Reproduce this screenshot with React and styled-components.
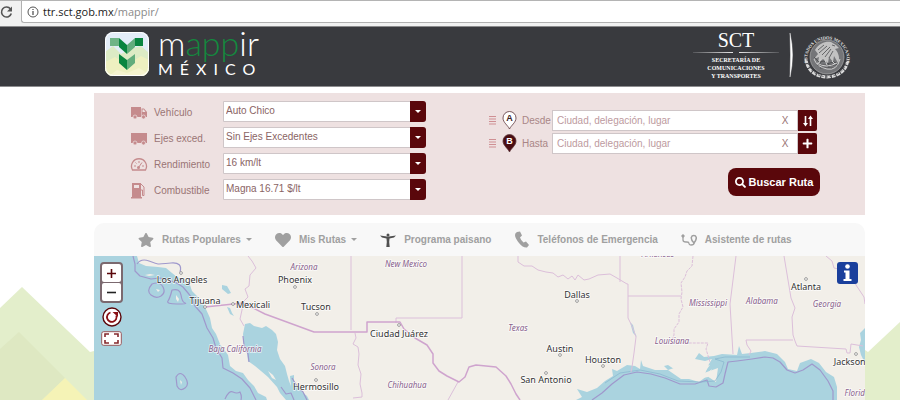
import React from "react";
import styled, { createGlobalStyle } from "styled-components";
import { FaStar, FaHeart, FaPlus, FaSearch } from "react-icons/fa";

const wine = "#5a070b";

const Global = createGlobalStyle`
* {
    box-sizing: border-box;
}
body {
    margin: 0;
    background: #fff;
    font-family: "Liberation Sans", Arial, sans-serif;
    font-size: 10px;
    color: #9a7575;
    overflow: hidden;
}
button, input, select {
    font: inherit;
    color: inherit;
    margin: 0;
    padding: 0;
    border: 0;
    border-radius: 0;
}
button {
    cursor: pointer;
}
svg {
    display: block;
    flex: none;
}
`;

const Page = styled.div`
    min-height: 100vh;
    display: flex;
    flex-direction: column;
`;

const BrowserBar = styled.div`
    height: 26px;
    display: flex;
    background: #f1f1f1;
    border-top: 1px solid #b4b4b4;
    padding-bottom: 3px;
`;

const Reload = styled.button`
    width: 21px;
    background: none;
    display: flex;
    align-items: center;
`;

const Address = styled.div`
    flex: 1;
    display: flex;
    align-items: center;
    gap: 4px;
    padding-left: 5px;
    background: #fff;
    border: 1px solid #b0b0b0;
    border-width: 0 0 1px 1px;
    border-radius: 0 0 0 3px;
`;

const UrlText = styled.span`
    font-family: "Open Sans", sans-serif;
    font-size: 11px;
    line-height: 20px;
    color: #8a8a8a;
    b {
        font-weight: 400;
        color: #222;
    }
`;

const Header = styled.header`
    height: 61px;
    display: flex;
    align-items: center;
    justify-content: space-between;
    padding: 0 49px 4px 105px;
    background: #393a3e;
    border-top: 1px solid #8a8a8c;
    border-bottom: 1px solid #8d8d8f;
`;

const Brand = styled.a`
    display: flex;
    gap: 9px;
    color: #fff;
    text-decoration: none;
    font-family: Lato, sans-serif;
`;

const BrandText = styled.div`
    display: flex;
    flex-direction: column;
`;

const BrandName = styled.span`
    font-size: 34px;
    font-weight: 300;
    line-height: 22px;
    height: 29px;
    em {
        font-style: normal;
        color: #14893e;
    }
`;

const BrandCountry = styled.span`
    font-size: 16px;
    line-height: 16px;
    letter-spacing: 7px;
`;

const Agency = styled.div`
    display: flex;
    align-items: center;
    gap: 8px;
`;

const AgencyText = styled.div`
    width: 86px;
    text-align: center;
    color: #fff;
    font-family: "Liberation Serif", serif;
    font-size: 6px;
    font-weight: 700;
    line-height: 8px;
`;

const AgencyName = styled.div`
    font-size: 20px;
    font-weight: 400;
    line-height: 20px;
`;

const AgencyRule = styled.div`
    display: flex;
    gap: 6px;
    margin: 2px 0 3px;
    &::before, &::after {
        content: "";
        flex: 1;
        height: 1px;
        background: linear-gradient(90deg, #55565a, #e6e6e6);
    }
    &::after {
        background: linear-gradient(270deg, #55565a, #e6e6e6);
    }
`;

const Body = styled.div`
    flex: 1;
    display: grid;
    grid-template-columns: 94px 1fr 35px;
`;

const Side = styled.div`
    display: flex;
    align-items: flex-end;
`;

const Content = styled.main`
    display: flex;
    flex-direction: column;
    padding-top: 6px;
    min-width: 0;
`;

const Panel = styled.section`
    display: flex;
    justify-content: space-between;
    min-height: 122px;
    padding: 5px 45px 12px 36px;
    background: #eee1e1;
    margin-bottom: 8px;
`;

const VehicleForm = styled.form`
    width: 296px;
`;

const Field = styled.div`
    display: grid;
    grid-template-columns: 24px 69px 1fr;
    align-items: center;
    height: 26px;
    label {
        padding-top: 3px;
    }
    > svg {
        margin-top: 3px;
    }
`;

const SelectBox = styled.div`
    display: flex;
    height: 21px;
    position: relative;
    select {
        flex: 1;
        appearance: none;
        background: #fff;
        border: 1px solid #cfc6c8;
        border-radius: 0 3px 3px 0;
        padding: 0 18px 2px 2px;
        color: #8a6464;
    }
`;

const Arrow = styled.span`
    position: absolute;
    top: 0;
    right: 0;
    width: 16px;
    height: 21px;
    display: grid;
    place-items: center;
    background: ${wine};
    border-radius: 0 3px 3px 0;
    pointer-events: none;
`;

const Caret = styled.i`
    border: solid transparent;
    border-width: 3px 3px 0;
    border-top-color: ${(p) => p.$color || "#fff"};
`;

const RouteForm = styled.form`
    width: 331px;
    display: flex;
    flex-direction: column;
    align-items: flex-end;
    padding-top: 12px;
`;

const Stop = styled.div`
    width: 100%;
    display: grid;
    grid-template-columns: 13px 20px 30px 1fr 19px;
    align-items: center;
    height: 21px;
    margin-bottom: 2px;
    padding-right: 3px;
    label {
        color: #a98686;
    }
`;

const Place = styled.div`
    display: flex;
    height: 21px;
    background: #fff;
    border: 1px solid #cfc6c8;
    input {
        flex: 1;
        min-width: 0;
        padding-left: 4px;
        background: none;
        outline: none;
    }
    input::placeholder {
        color: #bd9a9e;
        opacity: 1;
    }
    button {
        width: 24px;
        background: none;
    }
`;

const StopButton = styled.button`
    height: 21px;
    display: grid;
    place-items: center;
    background: ${wine};
    color: #fff;
    border-radius: 0 2px 2px 0;
`;

const SearchButton = styled.button`
    display: flex;
    align-items: center;
    justify-content: center;
    gap: 3px;
    width: 92px;
    height: 28px;
    margin-top: 12px;
    background: ${wine};
    color: #fff;
    border-radius: 8px;
    font-size: 11px;
    font-weight: 700;
`;

const Toolbar = styled.nav`
    display: flex;
    align-items: center;
    gap: 23px;
    height: 33px;
    padding-left: 44px;
    background: #f8f8f8;
    border-radius: 10px 10px 0 0;
`;

const Tool = styled.a`
    display: flex;
    align-items: center;
    gap: 8px;
    color: #a0a0a0;
    font-weight: 700;
    text-decoration: none;
    white-space: nowrap;
    ${Caret} {
        margin-left: -3px;
    }
`;

const MapArea = styled.section`
    position: relative;
    flex: 1;
    min-height: 144px;
    background: #f2efe9;
    overflow: hidden;
`;

const MapDrawing = styled.svg`
    width: 100%;
    height: auto;
    font-family: "Noto Sans", sans-serif;
    font-size: 9px;
    text-anchor: middle;
`;

const MapControls = styled.div`
    position: absolute;
    top: 6px;
    left: 6px;
    display: flex;
    flex-direction: column;
    align-items: center;
    gap: 4px;
`;

const Zoom = styled.div`
    width: 23px;
    border: 2px solid #7b696f;
    border-radius: 4px;
    background: #7b696f;
    display: grid;
    gap: 1px;
    button {
        height: 18px;
        display: grid;
        place-items: center;
        background: #fff;
        border-radius: 2px;
    }
`;

const IconButton = styled.button`
    background: none;
`;

const Info = styled.button`
    position: absolute;
    top: 6px;
    right: 7px;
    width: 21px;
    height: 22px;
    background: #1a3f9c;
    border-radius: 3px;
    color: #fff;
    display: grid;
    place-items: center;
`;

const LogoIcon = () => (
    <svg width="44" height="44" viewBox="0 0 44 44">
        <defs>
            <clipPath id="logo"><rect width="44" height="44" rx="8" /></clipPath>
        </defs>
        <g clipPath="url(#logo)">
            <path fill="#e3edf8" d="M0 0h44v44H0z" />
            <path fill="#dcebc5" d="M0 20l8-6 8 8 12-6 8-2 8 7v23H0z" />
            <path fill="#eef0c0" d="M0 30l10-5 12 8 14-9 8 4v16H0z" />
            <path fill="#f6f4cf" d="M4 44l8-6 10 3 12-5 10 6v2z" />
        </g>
        <rect x=".5" y=".5" width="43" height="43" rx="8" fill="none" stroke="#fff" />
        <path fill="#6fb487" d="M5 6h9v8H5z" />
        <path fill="#0a8540" d="M14 6l8 7v9l-8-7zM30 6h8v8h-8zM14 22l8 6v10l-8-7z" />
        <path fill="#62ad7c" d="M22 13l8-7v9l-8 7zM22 28l8-6v9l-8 7z" />
    </svg>
);

const Seal = () => (
    <svg width="48" height="50" viewBox="0 0 48 50">
        <defs>
            <path id="sealArc" d="M4.400 32a19.800 19.800 0 1 1 39.200 0" />
        </defs>
        <text fill="#e2e2e2" fontSize="4.500" fontWeight="700" fontFamily="Liberation Serif, serif" textAnchor="middle">
            <textPath href="#sealArc" startOffset="50%">ESTADOS UNIDOS MEXICANOS</textPath>
        </text>
        <circle cx="24" cy="27" r="17" fill="#747578" stroke="#b9b9b9" strokeWidth=".6" />
        <path fill="#c2c2c2" d="M12 20c4-7 11-9 16-8l5 3 3 3-4 1c4 4 5 10 3 14l-4-7-1 6-4-5-1 6-5-4-5 4 1-6-5 2 4-5z" />
        <path d="M15 20l6-5M16 23l8-7M19 25l8-8M22 27l6-8M26 28l4-7M29 15l3 1M11 27l5 5 5-1 3 3 6-2 4 1M18 32l-3 4M25 33l1 5M31 32l4 4M14 35h20M17 38h14" stroke="#4b4c4f" strokeWidth=".8" fill="none" />
        <path d="M11 29q3 8 13 10t13-10M14 33q9 6 20 0M18 29l-2 4M22 30l2 5M29 31l3 3" stroke="#cfcfcf" fill="none" />
        <path d="M3 29q2 17 21 18 19-1 21-18" fill="none" stroke="#dadada" strokeWidth="3" strokeDasharray="4 1" />
        <path d="M4 29q2 16 20 18 18-2 20-18" fill="none" stroke="#55565a" strokeDasharray="2 2" />
    </svg>
);

const VehicleIcon = ({ kind }) => (
    <svg width="18" height="17" viewBox="0 0 18 17" fill="#c58b8d">
        {kind === "truck" && <>
            <path d="M1 3h10v10H1zM11.500 4.500H14l3 3.500v5h-5.500z" />
            <path fill="#eee1e1" d="M12.500 5.500h1.300L15.500 8h-3z" />
        </>}
        {kind === "trailer" && <path d="M1 3h16v10H1z" />}
        {(kind === "truck" || kind === "trailer") && <>
            <circle cx="5" cy="13" r="2" stroke="#eee1e1" strokeWidth=".7" />
            <circle cx="13.500" cy="13" r="2" stroke="#eee1e1" strokeWidth=".7" />
        </>}
        {kind === "gauge" && <>
            <path d="M2.500 14a7.500 7.500 0 1 1 13 0z" fill="none" stroke="#c58b8d" strokeWidth="1.300" />
            <path d="M4 10h2M12 10h2M5.500 6.500l1 1M9 5v2M8.500 11.500l3.500-5" stroke="#c58b8d" fill="none" />
            <circle cx="8.500" cy="11.500" r="1.500" />
        </>}
        {kind === "pump" && <>
            <path d="M2 1h9v14H2zM1 15h11v1.500H1z" />
            <path fill="#eee1e1" d="M4 3h5v3H4z" />
            <path d="M11 2l3 3v8.500h-1.500V8H11" fill="none" stroke="#c58b8d" />
        </>}
    </svg>
);

const Pin = ({ letter, dark }) => (
    <svg width="15" height="19" viewBox="0 0 15 19">
        <path d="M7.500 18C6 14.500 1 11.500 1 7a6.500 6.500 0 0 1 13 0c0 4.500-5 7.500-6.500 11z" fill={dark ? "#4a0d12" : "#fff"} stroke="#5b3338" strokeWidth=".8" />
        <text x="7.500" y="10" fontSize="9" fontWeight="700" textAnchor="middle" fill={dark ? "#fff" : "#3c2226"}>{letter}</text>
    </svg>
);

const fields = [
    { id: "vehiculo", label: "Vehículo", value: "Auto Chico", kind: "truck" },
    { id: "ejes", label: "Ejes exced.", value: "Sin Ejes Excedentes", kind: "trailer" },
    { id: "rendimiento", label: "Rendimiento", value: "16 km/lt", kind: "gauge" },
    { id: "combustible", label: "Combustible", value: "Magna 16.71 $/lt", kind: "pump" },
];

// name, label x, baseline, dot x, dot y
const cities = [
    ["Los Angeles", 182, 283, 181, 273],
    ["Tijuana", 205, 304, 205, 307],
    ["Mexicali", 253, 308, 233, 304],
    ["Phoenix", 295, 283, 295, 287],
    ["Tucson", 316, 310, 317, 314],
    ["Hermosillo", 316, 390, 316, 380],
    ["Ciudad Juárez", 399, 337, 399, 325],
    ["Dallas", 577, 298, 577, 301],
    ["Austin", 560, 352, 560, 355],
    ["San Antonio", 546, 383, 546, 373],
    ["Houston", 603, 363, 603, 366],
    ["Atlanta", 806, 290, 806, 279],
    ["Jacksonville", 858, 365, 856, 354],
];

const states = [
    ["Arizona", 304, 270],
    ["New Mexico", 406, 267],
    ["Baja California", 235, 352],
    ["Sonora", 323, 370],
    ["Chihuahua", 407, 388],
    ["Texas", 518, 331],
    ["Louisiana", 672, 344],
    ["Mississippi", 708, 306],
    ["Alabama", 762, 304],
    ["Georgia", 827, 307],
    ["Florida", 857, 396],
    ["Arkansas", 658, 257],
];

const MapSvg = () => (
    <MapDrawing viewBox="94 256 771 144" role="img" aria-label="Mapa">
        <g fill="#aad3df">
            <path d="M94 256H137L139 263 146 266 158 267 166 268 172 273 177 277 184 279 190 285 192 291 199 298 205 307 210 318 212 328 216 334 220 344 228 355 230 366 236 371 243 373 248 380 254 386 258 393 266 397 267 400H94z" />
            <path d="M245 324L250 323 254 326 262 328 266 326 272 330 276 334 278 342 277 350 280 359 285 366 287 374 289 381 291 386 290 376 294 375 294 383 300 390 307 396 309 400H286L280 393 277 387 268 377 261 371 255 366 248 361 247 352 244 345 243 334z" />
            <path d="M576 400L582 397 577 389 587 392 597 388 605 381 613 376 612 369 617 371 627 365 635 366 640 369 641 360 643 366 655 370 668 370 664 366 668 365 677 371 683 376 692 375 697 379 708 377 712 369 704 376 709 364 712 359 705 361 695 359 699 353 704 357 714 356 722 354 737 355 739 346 742 354 751 353 765 351 777 354 785 362 788 369 797 371 800 363 811 359 819 363 826 372 834 377 837 387 837 400z" />
            <path d="M865 328L860 333 861 340 859 347 861 355 865 363z" />
            <path d="M222 285l5 1 4 7-3 1-6-5zM227 307l3 1 2 5 2 3-4-2zM630 322l3 3 2 8 2 4-4-4z" />
        </g>
        <g fill="#f2efe9">
            <path d="M145 275l5-1 5 1-6 1zM156 276l4 0-2 1zM156 289l4 1-2 2zM176 295l3 4-1 3-2-3zM180 380l2 2-1 3zM268 371l5 4 3 5-4-2z" />
            <path d="M668 370l18-6 14 4 10-3-6 8 14-5-2 14-9-6-8 6-10-3-8 0z" />
        </g>
        <g fill="none" stroke="#9f98cc" strokeWidth="1.200" strokeLinejoin="round">
            <path d="M133 256L135 264 135 271 140 276 151 279 160 278 167 280 175 282 183 287 188 293 192 298 195 306 202 314 207 328 213 338 216 348 222 358 223 368 233 373 242 379 250 388 256 400" />
            <path d="M152 284q8-3 11 3t-2 9-10-1 1-11zM172 290q8-2 9 5t4 8-8 1-9-3 4-11zM176 377q4-7 9 0t0 11-8-2zM225 399q4-9 8-7t7 0q2 4 1 8" />
            <path d="M137 264q4-6 12-3t9 3 13-1 9 9" />
            <path d="M243 336L244 345 248 354 249 362M281 387l5 7 5-1 3 7M292 378l5 8 6 6 4 8" />
            <path d="M592 400L602 393 612 384 624 375 637 372 651 374 665 378 680 384 695 384 707 380 709 386 716 387 723 383 725 374 728 362 737 361 752 359 765 357 773 358 780 362 787 370 795 373 803 370 812 364 820 370 828 381 833 391 833 400" />
            <path stroke="#86b5cf" strokeWidth=".7" d="M605 383L620 373 640 370 660 374 678 381 700 382 715 381 721 372 724 362 715 359 725 357 750 357" />
        </g>
        <g fill="none" stroke="#dcbfda">
            <path d="M248 256l4 5 4 7-6 7-1 11-4 3 3 8-5 5-1 8-2 9 4 7M351 256v74M462 256v62h-66v5M355 333l1 5-3 6 5 3 1 7-1 11 3 9-1 10 2 9 0 4-9 1" />
            <path d="M518 256v6l6 4 8 0 6 4 8 2 7 1 5 4 5-2 5 4 4-3 3 4 3-5 6 5 5-1 9-4 12-1 7 4 10 6h1v34l4 8 4 11-2 16-2 14-1 5M620 256v26M628 296h53" />
            <path d="M693 256l-1 10-5 5-2 6-4 6 1 9-1 7 2 8-4 7 0 8-5 7 0 6-3 8h37l-2 6 4 13" strokeDasharray="3 1" />
            <path d="M736 256l-6 48 3 50M784 256l7 42 4 10-3 9 1 18 2 6 2 5 49 3 1 4 3 0 1-9 12 2M746 340h47M746 340l1 5 4 6-2 4M826 256l6 5 2 7 9 2 8 5 5 10 8 12 1 7M448 400l10-18" />
        </g>
        <g fill="none" stroke="#cfa4ce" strokeWidth="1.500" strokeLinejoin="round">
            <path d="M205 307l38-4 22 11 49 18h53v-10h33l4 7 11 9 12 7 6 9 0 9 6 8 8 5 12 6 6-5 4-10 7-2 20 2 10 9 5 8 5 10 4 6" />
        </g>
        <g fill="#fff" stroke="#777" strokeWidth=".7">
            {cities.map(([name, , , x, y]) => <circle key={name} cx={x} cy={y} r="1.400" />)}
        </g>
        <g fill="#333" stroke="#fff" strokeWidth="1.500" paintOrder="stroke" strokeOpacity=".8">
            {cities.map(([name, x, y]) => <text key={name} x={x} y={y}>{name}</text>)}
        </g>
        <g fill="#88608b" fontSize="8" fontStyle="italic" stroke="#fff" strokeWidth="1.500" paintOrder="stroke" strokeOpacity=".7">
            {states.map(([name, x, y]) => <text key={name} x={x} y={y}>{name}</text>)}
        </g>
    </MapDrawing>
);

export default function App() {
    return <><Global /><Page>
        <BrowserBar>
            <Reload aria-label="Recargar">
                <svg width="14" height="14" viewBox="0 0 14 14">
                    <path d="M10.500 4A5 5 0 1 0 11.300 8.500" fill="none" stroke="#555" strokeWidth="1.600" />
                    <path d="M12 1.500V6.500H7z" fill="#555" />
                </svg>
            </Reload>
            <Address>
                <svg width="12" height="12" viewBox="0 0 12 12" fill="none" stroke="#555">
                    <circle cx="6" cy="6" r="5" />
                    <path d="M6 5v4M6 3v1" strokeWidth="1.300" />
                </svg>
                <UrlText><b>ttr.sct.gob.mx</b>/mappir/</UrlText>
            </Address>
        </BrowserBar>
        <Header>
            <Brand href="#">
                <LogoIcon />
                <BrandText>
                    <BrandName>m<em>app</em>ir</BrandName>
                    <BrandCountry>MÉXICO</BrandCountry>
                </BrandText>
            </Brand>
            <Agency>
                <AgencyText>
                    <AgencyName>SCT</AgencyName>
                    <AgencyRule />
                    SECRETARÍA DE<br />COMUNICACIONES<br />Y TRANSPORTES
                </AgencyText>
                <svg width="8" height="44" viewBox="0 0 8 44"><path d="M3 0q5 22 0 44 1-22 0-44z" fill="#fff" stroke="#fff" strokeWidth=".4" /></svg>
                <Seal />
            </Agency>
        </Header>
        <Body>
            <Side>
                <svg width="94" height="113" viewBox="0 0 94 113">
                    <path fill="#e3eecb" d="M0 21L22 0l68 65 4-1v49H0z" />
                    <path fill="#dee8c2" d="M0 62l19-17 46 46-23 22H0z" />
                    <path fill="#f5f3b6" d="M65 91l22 22H42z" />
                </svg>
            </Side>
            <Content>
                <Panel>
                    <VehicleForm>
                        {fields.map((f) => <Field key={f.id}>
                            <VehicleIcon kind={f.kind} />
                            <label htmlFor={f.id}>{f.label}</label>
                            <SelectBox>
                                <select id={f.id}><option>{f.value}</option></select>
                                <Arrow><Caret /></Arrow>
                            </SelectBox>
                        </Field>)}
                    </VehicleForm>
                    <RouteForm onSubmit={(e) => e.preventDefault()}>
                        {["Desde", "Hasta"].map((name, i) => <Stop key={name}>
                            <svg width="8" height="9" viewBox="0 0 8 9"><path d="M0 .500h7M0 3h7M0 5.500h7M0 8h7" stroke="#cf8f93" /></svg>
                            <Pin letter={i ? "B" : "A"} dark={i === 1} />
                            <label htmlFor={name}>{name}</label>
                            <Place>
                                <input id={name} placeholder="Ciudad, delegación, lugar" />
                                <button type="button" aria-label="Borrar">X</button>
                            </Place>
                            <StopButton type="button" aria-label={i ? "Agregar" : "Invertir"}>
                                {i ? <FaPlus size={11} /> : <svg width="10" height="12" viewBox="0 0 10 12">
                                    <path d="M2.500 1v8M7.500 11V3" stroke="#fff" strokeWidth="1.600" />
                                    <path d="M0 8h5l-2.500 3.500zM5 4h5L7.500.500z" fill="#fff" />
                                </svg>}
                            </StopButton>
                        </Stop>)}
                        <SearchButton><FaSearch size={11} />Buscar Ruta</SearchButton>
                    </RouteForm>
                </Panel>
                <Toolbar>
                    <Tool href="#"><FaStar size={16} />Rutas Populares<Caret $color="#a0a0a0" /></Tool>
                    <Tool href="#"><FaHeart size={16} />Mis Rutas<Caret $color="#a0a0a0" /></Tool>
                    <Tool href="#">
                        <svg width="16" height="14" viewBox="0 0 16 14" fill="#505050">
                            <circle cx="8" cy="2" r="1.500" />
                            <path d="M0 2.500l7 1h2l7-1-2 2-4.500 1L9.200 9l.5 5h-3.400l.5-5-.3-3.500L2 4.500z" />
                        </svg>
                        Programa paisano
                    </Tool>
                    <Tool href="#">
                        <svg width="15" height="17" viewBox="0 0 15 17" fill="#a0a0a0">
                            <path d="M3 1L6 .500l2 4-2 2q1 3 3.500 5l2.500-1 3 3.500-2 2.500Q9 17 5 12T1 4q0-2 2-3z" />
                        </svg>
                        Teléfonos de Emergencia
                    </Tool>
                    <Tool href="#">
                        <svg width="16" height="12" viewBox="0 0 16 12" fill="none" stroke="#a0a0a0">
                            <path d="M2 3v3q0 2 3 2h1q2 0 2 1.500T10 11q3 0 3-2" strokeWidth="1.300" />
                            <circle cx="2" cy="2" r="1.200" fill="#a0a0a0" />
                            <path d="M13 9q-3-3-2.700-5.500a2.600 2.600 0 0 1 5 0Q15.500 6 13 9z" strokeWidth="1.500" />
                        </svg>
                        Asistente de rutas
                    </Tool>
                </Toolbar>
                <MapArea>
                    <MapSvg />
                    <MapControls>
                        <Zoom>
                            <button aria-label="Acercar"><svg width="9" height="9" viewBox="0 0 9 9"><path d="M0 4.500h9M4.500 0v9" stroke={wine} strokeWidth="1.600" /></svg></button>
                            <button aria-label="Alejar"><svg width="9" height="9" viewBox="0 0 9 9"><path d="M0 4.500h9" stroke="#222" strokeWidth="1.600" /></svg></button>
                        </Zoom>
                        <IconButton aria-label="Reiniciar">
                            <svg width="20" height="20" viewBox="0 0 20 20">
                                <circle cx="10" cy="10" r="9" fill="#fff" stroke={wine} strokeWidth="1.400" />
                                <path d="M8.500 5.500A4.800 4.800 0 1 0 14.300 8.500" fill="none" stroke="#8a1015" strokeWidth="1.800" />
                                <path d="M10.500 5H16v5z" fill="#8a1015" />
                            </svg>
                        </IconButton>
                        <IconButton aria-label="Pantalla completa">
                            <svg width="21" height="15" viewBox="0 0 21 15">
                                <rect x=".7" y=".7" width="19.600" height="13.600" rx="2" fill="#fff" stroke="#98575a" />
                                <path d="M4 6V3h4M13 3h4v3M17 9v3h-4M8 12H4V9" fill="none" stroke="#85292d" strokeWidth="1.600" />
                            </svg>
                        </IconButton>
                    </MapControls>
                    <Info aria-label="Información">
                        <svg width="9" height="18" viewBox="0 0 9 18" fill="currentColor">
                            <circle cx="4.500" cy="2.500" r="2.300" />
                            <path d="M1 6.500h5.500V15H8.500v2H.500v-2H2.500V8.500H1z" />
                        </svg>
                    </Info>
                </MapArea>
            </Content>
            <Side>
                <svg width="35" height="78" viewBox="0 0 35 78">
                    <path fill="#e3eecb" d="M0 28l3 2L35 0v78H0z" />
                </svg>
            </Side>
        </Body>
    </Page></>;
}
